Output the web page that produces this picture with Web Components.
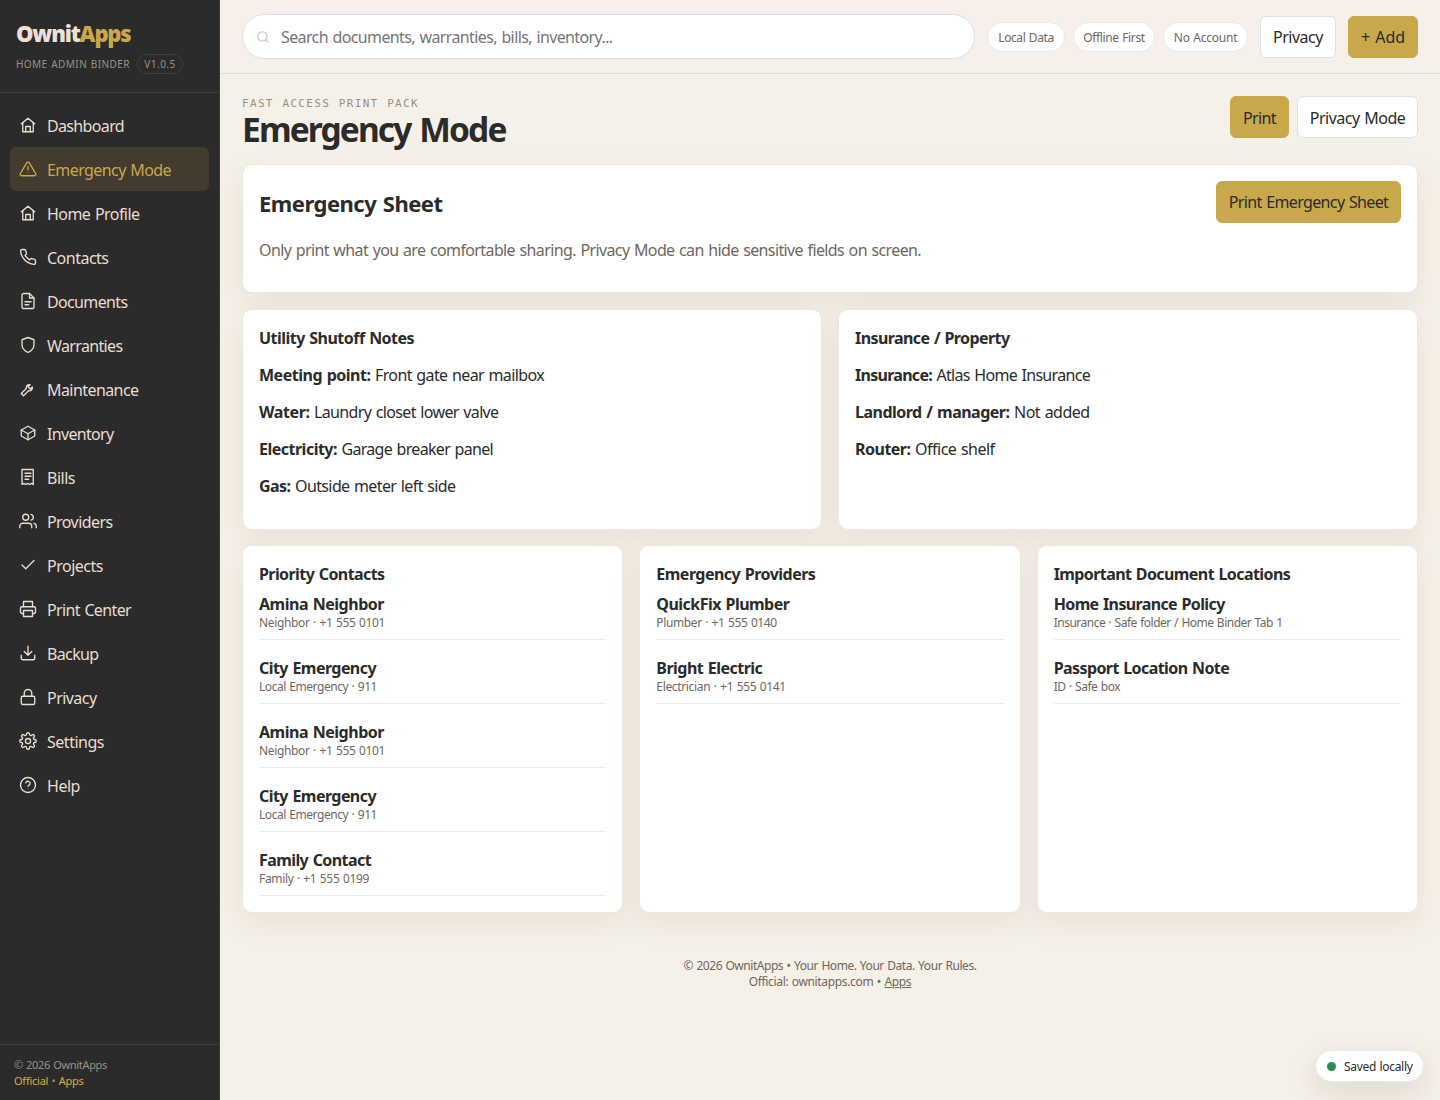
<!DOCTYPE html>
<html lang="en">
<head>
<meta charset="utf-8">
<title>OwnitApps - Emergency Mode</title>
<style>
  :root {
    --dark: #2b2b2b;
    --gold: #c8a84b;
    --cream: #f5f0e8;
    --ink: #2b2b2b;
    --muted: #6f675e;
    --line: #e6e4e1;
  }
  * { box-sizing: border-box; }
  body {
    margin: 0;
    background: var(--cream);
    color: var(--ink);
    font: 16px/21px "Noto Sans", "Open Sans", sans-serif;
  }
</style>
</head>
<body>
<binder-app></binder-app>

<script>
const ICONS = {
  home: '<path d="M3 10.5 12 3l9 7.5"/><path d="M5 9v12h14V9"/><path d="M9 21v-7h6v7"/>',
  alert: '<path d="M10.3 3.9 1.8 18a2 2 0 0 0 1.7 3h17a2 2 0 0 0 1.7-3L13.7 3.9a2 2 0 0 0-3.4 0z"/><path d="M12 9v4"/><path d="M12 17h.01" stroke-opacity=".35"/>',
  phone: '<path d="M22 16.9v3a2 2 0 0 1-2.2 2 19.8 19.8 0 0 1-8.6-3.1 19.5 19.5 0 0 1-6-6A19.8 19.8 0 0 1 2.1 4.2 2 2 0 0 1 4.1 2h3a2 2 0 0 1 2 1.7c.1 1 .4 1.9.7 2.8a2 2 0 0 1-.5 2.1L8.1 9.9a16 16 0 0 0 6 6l1.3-1.3a2 2 0 0 1 2.1-.4c.9.3 1.8.6 2.8.7a2 2 0 0 1 1.7 2z"/>',
  file: '<path d="M14 2H6a2 2 0 0 0-2 2v16a2 2 0 0 0 2 2h12a2 2 0 0 0 2-2V8z"/><path d="M14 2v6h6"/><path d="M8 13h8M8 17h5"/>',
  shield: '<path d="M12 22s8-4 8-10V5l-8-3-8 3v7c0 6 8 10 8 10z"/>',
  wrench: '<path d="M14.7 6.3a4 4 0 0 0-5 5L3 18l3 3 6.7-6.7a4 4 0 0 0 5-5L15 12l-3-3z"/>',
  box: '<path d="M21 8l-9-5-9 5v8l9 5 9-5z"/><path d="M3 8l9 5 9-5M12 13v8"/>',
  receipt: '<path d="M4 2h15v20l-2.5-1.5L14 22l-2.5-1.5L9 22l-2.5-1.5L4 22z"/><path d="M8 7h8M8 11h8M8 15h5"/>',
  users: '<path d="M17 21v-2a4 4 0 0 0-4-4H5a4 4 0 0 0-4 4v2"/><circle cx="9" cy="7" r="4"/><path d="M23 21v-2a4 4 0 0 0-3-3.9M16 3.1a4 4 0 0 1 0 7.8"/>',
  check: '<path d="M20 6 9 17l-5-5"/>',
  printer: '<path d="M6 9V2h12v7"/><path d="M6 18H4a2 2 0 0 1-2-2v-5a2 2 0 0 1 2-2h16a2 2 0 0 1 2 2v5a2 2 0 0 1-2 2h-2"/><path d="M6 14h12v8H6z"/>',
  download: '<path d="M21 15v4a2 2 0 0 1-2 2H5a2 2 0 0 1-2-2v-4"/><path d="M7 10l5 5 5-5M12 15V3"/>',
  lock: '<rect x="3" y="11" width="18" height="11" rx="2"/><path d="M7 11V7a5 5 0 0 1 10 0v4"/>',
  gear: '<circle cx="12" cy="12" r="3.4"/><path d="M19.4 15a1.7 1.7 0 0 0 .3 1.8l.1.1a2 2 0 1 1-2.8 2.8l-.1-.1a1.7 1.7 0 0 0-2.9 1.2v.2a2 2 0 0 1-4 0v-.1a1.7 1.7 0 0 0-2.9-1.2l-.1.1a2 2 0 1 1-2.8-2.8l.1-.1a1.7 1.7 0 0 0-1.2-2.9H3a2 2 0 0 1 0-4h.1a1.7 1.7 0 0 0 1.2-2.9l-.1-.1a2 2 0 1 1 2.8-2.8l.1.1a1.7 1.7 0 0 0 2.9-1.2V3a2 2 0 0 1 4 0v.1a1.7 1.7 0 0 0 2.9 1.2l.1-.1a2 2 0 1 1 2.8 2.8l-.1.1a1.7 1.7 0 0 0 1.2 2.9h.1a2 2 0 0 1 0 4h-.1a1.7 1.7 0 0 0-1.5 1z"/>',
  help: '<circle cx="12" cy="12" r="10"/><path d="M9.1 9a3 3 0 0 1 5.8 1c0 2-2.9 2.6-2.9 3.6"/><path d="M12 17h.01" stroke-opacity=".3"/>',
  search: '<circle cx="11" cy="11" r="8"/><path d="M21 21l-4.3-4.3"/>',
};

const NAV = [
  ['home', 'Dashboard', 77],
  ['alert', 'Emergency Mode', 124],
  ['home', 'Home Profile', 92.5],
  ['phone', 'Contacts', 61.5],
  ['file', 'Documents', 80.5],
  ['shield', 'Warranties', 75.5],
  ['wrench', 'Maintenance', 91.5],
  ['box', 'Inventory', 66.5],
  ['receipt', 'Bills', 28],
  ['users', 'Providers', 65.5],
  ['check', 'Projects', 56],
  ['printer', 'Print Center', 84],
  ['download', 'Backup', 51.5],
  ['lock', 'Privacy', 49.5],
  ['gear', 'Settings', 57],
  ['help', 'Help', 33],
];

const BASE = '*{box-sizing:border-box}h1,h2,h3,p{margin:0}';

class BaseElement extends HTMLElement {
  connectedCallback() {
    if (this.shadowRoot) return;
    this.attachShadow({ mode: 'open' }).innerHTML = `<style>${BASE}${this.styles()}</style>${this.markup()}`;
  }
}

class UiIcon extends BaseElement {
  styles() {
    return `
      :host { display: block; flex: none; width: 18px; height: 18px; }
      svg { display: block; width: 100%; height: 100%; fill: none; stroke: currentColor;
        stroke-width: 1.8; stroke-linecap: round; stroke-linejoin: round; }
    `;
  }
  markup() {
    return `<svg viewBox="0 0 24 24">${ICONS[this.getAttribute('name')]}</svg>`;
  }
}

// A single line of text, tracked so that it fills the width in "w".
class TextRun extends BaseElement {
  styles() {
    return ':host { display: inline-block; white-space: pre; word-spacing: .06em; }';
  }
  markup() {
    return '<slot></slot>';
  }
  connectedCallback() {
    super.connectedCallback();
    const target = parseFloat(this.getAttribute('w'));
    if (!target) return;
    this.style.letterSpacing = '0';
    const natural = this.getBoundingClientRect().width;
    const count = this.textContent.length;
    this.style.letterSpacing = ((target - natural) / count).toFixed(4) + 'px';
  }
}

class NavItem extends BaseElement {
  styles() {
    return `
      :host { display: flex; align-items: center; height: 44px; padding: 0 9px; border-radius: 6px;
        color: #e8ddd0; }
      :host([active]) { background: #433b2d; color: var(--gold); }
      .label { margin: 2px 0 0 10px; line-height: 22px; }
    `;
  }
  markup() {
    return `<ui-icon name="${this.getAttribute('icon')}"></ui-icon><span class="label"><slot></slot></span>`;
  }
}

class SideBar extends BaseElement {
  styles() {
    return `
      :host { display: flex; flex-direction: column; width: 220px; height: 1100px; flex: none;
        background: var(--dark); border-right: 1px solid #3b3b3b; }
      header { height: 93px; padding: 20px 16px 0; border-bottom: 1px solid #3f3f3f; }
      .brand { height: 30px; font-size: 22px; line-height: 27px; font-weight: 900; color: #eee0d5; }
      .brand b { font-weight: 900; color: var(--gold); }
      .sub { display: flex; align-items: center; height: 20px; margin-top: 4px; gap: 7px; font-size: 10px;
        line-height: 20px; color: #9a9082; }
      .ver { display: flex; justify-content: center; width: 46px; height: 20px; line-height: 19px;
        border: 1px solid #3f3f3f; border-radius: 10px; }
      nav { flex: 1; padding: 10px 10px 0; }
      footer { height: 56px; padding: 12px 14px; border-top: 1px solid #3f3f3f; font-size: 11px;
        line-height: 16px; color: #9a9082; }
      a { color: #d9ae3e; }
    `;
  }
  markup() {
    const items = NAV.map(([icon, label, w]) =>
      `<nav-item icon="${icon}"${label === 'Emergency Mode' ? ' active' : ''}><text-run w="${w}">${label}</text-run></nav-item>`
    ).join('');
    return `
      <header>
        <div class="brand"><text-run w="114.5">Ownit<b>Apps</b></text-run></div>
        <div class="sub"><text-run w="114">HOME ADMIN BINDER</text-run><span class="ver"><text-run w="31.5">V1.0.5</text-run></span></div>
      </header>
      <nav>${items}</nav>
      <footer>
        <div><text-run w="93">© 2026 OwnitApps</text-run></div>
        <div><text-run w="69.5"><a>Official</a> • <a>Apps</a></text-run></div>
      </footer>
    `;
  }
}

class UiButton extends BaseElement {
  styles() {
    return `
      :host { display: flex; align-items: center; justify-content: center; flex: none; height: 42px;
        padding-top: 2px; background: #fff; border: 1px solid #e1e1e0; border-radius: 6px; }
      :host([primary]) { background: var(--gold); border-color: var(--gold); }
    `;
  }
  markup() {
    return '<slot></slot>';
  }
}

class InfoChip extends BaseElement {
  styles() {
    return `
      :host { display: flex; align-items: center; justify-content: center; flex: none; height: 30px;
        padding-top: 2px; background: #fff; border: 1px solid #ece9e5; border-radius: 15px;
        font-size: 12px; line-height: 16px; color: var(--muted); }
    `;
  }
  markup() {
    return '<slot></slot>';
  }
}

class TopBar extends BaseElement {
  styles() {
    return `
      :host { display: flex; align-items: center; gap: 12px; height: 74px; padding: 0 22px;
        background: #f7f0ea; border-bottom: 1px solid #e1ddd9; }
      .search { flex: 1; display: flex; align-items: center; height: 45px; padding: 0 13px;
        background: #fff; border: 1px solid #e0dfde; border-radius: 23px; color: #757575; }
      .search ui-icon { width: 14px; height: 14px; color: #c4bfb6; }
      .search span { margin: 2px 0 0 11px; }
      .chips { display: flex; gap: 8px; }
    `;
  }
  markup() {
    return `
      <div class="search"><ui-icon name="search"></ui-icon><span><text-run w="331.5">Search documents, warranties, bills, inventory...</text-run></span></div>
      <div class="chips">
        <info-chip style="width:78px"><text-run w="55.5">Local Data</text-run></info-chip>
        <info-chip style="width:82px"><text-run w="61.5">Offline First</text-run></info-chip>
        <info-chip style="width:85px"><text-run w="63.5">No Account</text-run></info-chip>
      </div>
      <ui-button style="width:76px"><text-run w="50">Privacy</text-run></ui-button>
      <ui-button primary style="width:70px"><text-run w="44">+ Add</text-run></ui-button>
    `;
  }
}

class UiCard extends BaseElement {
  styles() {
    return `
      :host { display: block; padding: 16px; background: #fff; border: 1px solid #ebe8e4;
        border-radius: 10px; box-shadow: 0 10px 30px rgba(110, 70, 30, .08); }
    `;
  }
  markup() {
    return '<slot></slot>';
  }
}

class CardTitle extends BaseElement {
  styles() {
    return ':host { display: block; height: 24px; } h3 { font-size: 16px; line-height: 25px; font-weight: 700; }';
  }
  markup() {
    return '<h3><slot></slot></h3>';
  }
}

class FactRow extends BaseElement {
  styles() {
    return ':host { display: block; height: 21px; margin: 15px 0 16px; } p { line-height: 20px; } b { font-weight: 700; }';
  }
  markup() {
    const [key, kw, value, vw] = this.getAttribute('data').split('|');
    return `<p><b><text-run w="${kw}">${key}</text-run></b><text-run w="${vw}"> ${value}</text-run></p>`;
  }
}

class ListEntry extends BaseElement {
  styles() {
    return `
      :host { display: block; height: 52px; padding-top: 6px; border-bottom: 1px solid #ebebea; }
      b { display: block; height: 21px; font-weight: 700; line-height: 21px; }
      small { display: block; font-size: 12px; line-height: 16px; color: var(--muted); }
    `;
  }
  markup() {
    const [name, nw, detail, dw] = this.getAttribute('data').split('|');
    return `<b><text-run w="${nw}">${name}</text-run></b><small><text-run w="${dw}">${detail}</text-run></small>`;
  }
}

class EmergencyPage extends BaseElement {
  styles() {
    return `
      :host { display: flex; flex-direction: column; gap: 16px; padding: 22px 22px 0; }
      .head, .sheet-head { display: flex; justify-content: space-between; }
      .head { height: 52px; }
      .eyebrow { height: 14px; font: 11px/15px "DejaVu Sans Mono", monospace; color: #9a9080; }
      h1 { font-size: 33.5px; line-height: 38px; font-weight: 700; }
      .actions { display: flex; gap: 8px; }
      .sheet { height: 129px; }
      .sheet-head { height: 42px; }
      .sheet-head ui-button { padding-top: 0; }
      h2 { font-size: 22px; line-height: 44px; font-weight: 700; }
      .note { margin-top: 16px; line-height: 22px; color: var(--muted); }
      .two, .three { display: grid; gap: 16px; }
      .two { grid-template-columns: repeat(2, 1fr); height: 220px; }
      .three { grid-template-columns: repeat(3, 1fr); height: 368px; }
      .list { display: flex; flex-direction: column; gap: 12px; margin-top: 2px; }
      footer { margin-top: 29px; text-align: center; font-size: 12px; line-height: 16px; color: var(--muted); }
      a { text-decoration: underline; }
    `;
  }
  markup() {
    return `
      <div class="head">
        <div>
          <div class="eyebrow"><text-run w="177">FAST ACCESS PRINT PACK</text-run></div>
          <h1><text-run w="263.5">Emergency Mode</text-run></h1>
        </div>
        <div class="actions">
          <ui-button primary style="width:59px"><text-run w="33">Print</text-run></ui-button>
          <ui-button style="width:121px"><text-run w="95.5">Privacy Mode</text-run></ui-button>
        </div>
      </div>
      <ui-card class="sheet">
        <div class="sheet-head">
          <h2><text-run w="183.5">Emergency Sheet</text-run></h2>
          <ui-button primary style="width:185px"><text-run w="159.5">Print Emergency Sheet</text-run></ui-button>
        </div>
        <p class="note"><text-run w="662">Only print what you are comfortable sharing. Privacy Mode can hide sensitive fields on screen.</text-run></p>
      </ui-card>
      <div class="two">
        <ui-card>
          <card-title><text-run w="155">Utility Shutoff Notes</text-run></card-title>
          <fact-row data="Meeting point:|111.5|Front gate near mailbox|173.5"></fact-row>
          <fact-row data="Water:|50.5|Laundry closet lower valve|189"></fact-row>
          <fact-row data="Electricity:|78|Garage breaker panel|156"></fact-row>
          <fact-row data="Gas:|31.5|Outside meter left side|165"></fact-row>
        </ui-card>
        <ui-card>
          <card-title><text-run w="154.5">Insurance / Property</text-run></card-title>
          <fact-row data="Insurance:|77|Atlas Home Insurance|158"></fact-row>
          <fact-row data="Landlord / manager:|154.5|Not added|80"></fact-row>
          <fact-row data="Router:|55.5|Office shelf|84"></fact-row>
        </ui-card>
      </div>
      <div class="three">
        <ui-card>
          <card-title><text-run w="125.5">Priority Contacts</text-run></card-title>
          <div class="list">
            <list-entry data="Amina Neighbor|125|Neighbor · +1 555 0101|126"></list-entry>
            <list-entry data="City Emergency|117|Local Emergency · 911|118"></list-entry>
            <list-entry data="Amina Neighbor|125|Neighbor · +1 555 0101|126"></list-entry>
            <list-entry data="City Emergency|117|Local Emergency · 911|118"></list-entry>
            <list-entry data="Family Contact|112|Family · +1 555 0199|110"></list-entry>
          </div>
        </ui-card>
        <ui-card>
          <card-title><text-run w="159">Emergency Providers</text-run></card-title>
          <div class="list">
            <list-entry data="QuickFix Plumber|133|Plumber · +1 555 0140|120.5"></list-entry>
            <list-entry data="Bright Electric|106|Electrician · +1 555 0141|129.5"></list-entry>
          </div>
        </ui-card>
        <ui-card>
          <card-title><text-run w="236.5">Important Document Locations</text-run></card-title>
          <div class="list">
            <list-entry data="Home Insurance Policy|171|Insurance · Safe folder / Home Binder Tab 1|229"></list-entry>
            <list-entry data="Passport Location Note|175.5|ID · Safe box|66.5"></list-entry>
          </div>
        </ui-card>
      </div>
      <footer>
        <div><text-run w="293">© 2026 OwnitApps • Your Home. Your Data. Your Rules.</text-run></div>
        <div><text-run w="162.5">Official: ownitapps.com • <a>Apps</a></text-run></div>
      </footer>
    `;
  }
}

class SaveToast extends BaseElement {
  styles() {
    return `
      :host { position: absolute; right: 16px; bottom: 18px; display: flex; align-items: center; gap: 8px;
        width: 109px; height: 32px; padding: 0 0 0 11px; background: #fff; border: 1px solid #ebe8e4;
        border-radius: 16px; box-shadow: 0 10px 30px rgba(60, 40, 20, .12); font-size: 12px; line-height: 17px; }
      i { flex: none; width: 9px; height: 9px; border-radius: 50%; background: #2e8b57; }
      span { padding-top: 1px; }
    `;
  }
  markup() {
    return '<i></i><span><text-run w="68.5">Saved locally</text-run></span>';
  }
}

class BinderApp extends BaseElement {
  styles() {
    return `
      :host { position: relative; display: flex; width: 1440px; height: 1100px; overflow: hidden; }
      main { flex: 1; min-width: 0; }
    `;
  }
  markup() {
    return '<side-bar></side-bar><main><top-bar></top-bar><emergency-page></emergency-page></main><save-toast></save-toast>';
  }
}

customElements.define('binder-app', BinderApp);
customElements.define('side-bar', SideBar);
customElements.define('top-bar', TopBar);
customElements.define('emergency-page', EmergencyPage);
customElements.define('save-toast', SaveToast);
customElements.define('ui-card', UiCard);
customElements.define('card-title', CardTitle);
customElements.define('fact-row', FactRow);
customElements.define('list-entry', ListEntry);
customElements.define('nav-item', NavItem);
customElements.define('ui-button', UiButton);
customElements.define('info-chip', InfoChip);
customElements.define('ui-icon', UiIcon);
// last, so that every run is measured inside its finished parent
customElements.define('text-run', TextRun);
</script>
</body>
</html>
